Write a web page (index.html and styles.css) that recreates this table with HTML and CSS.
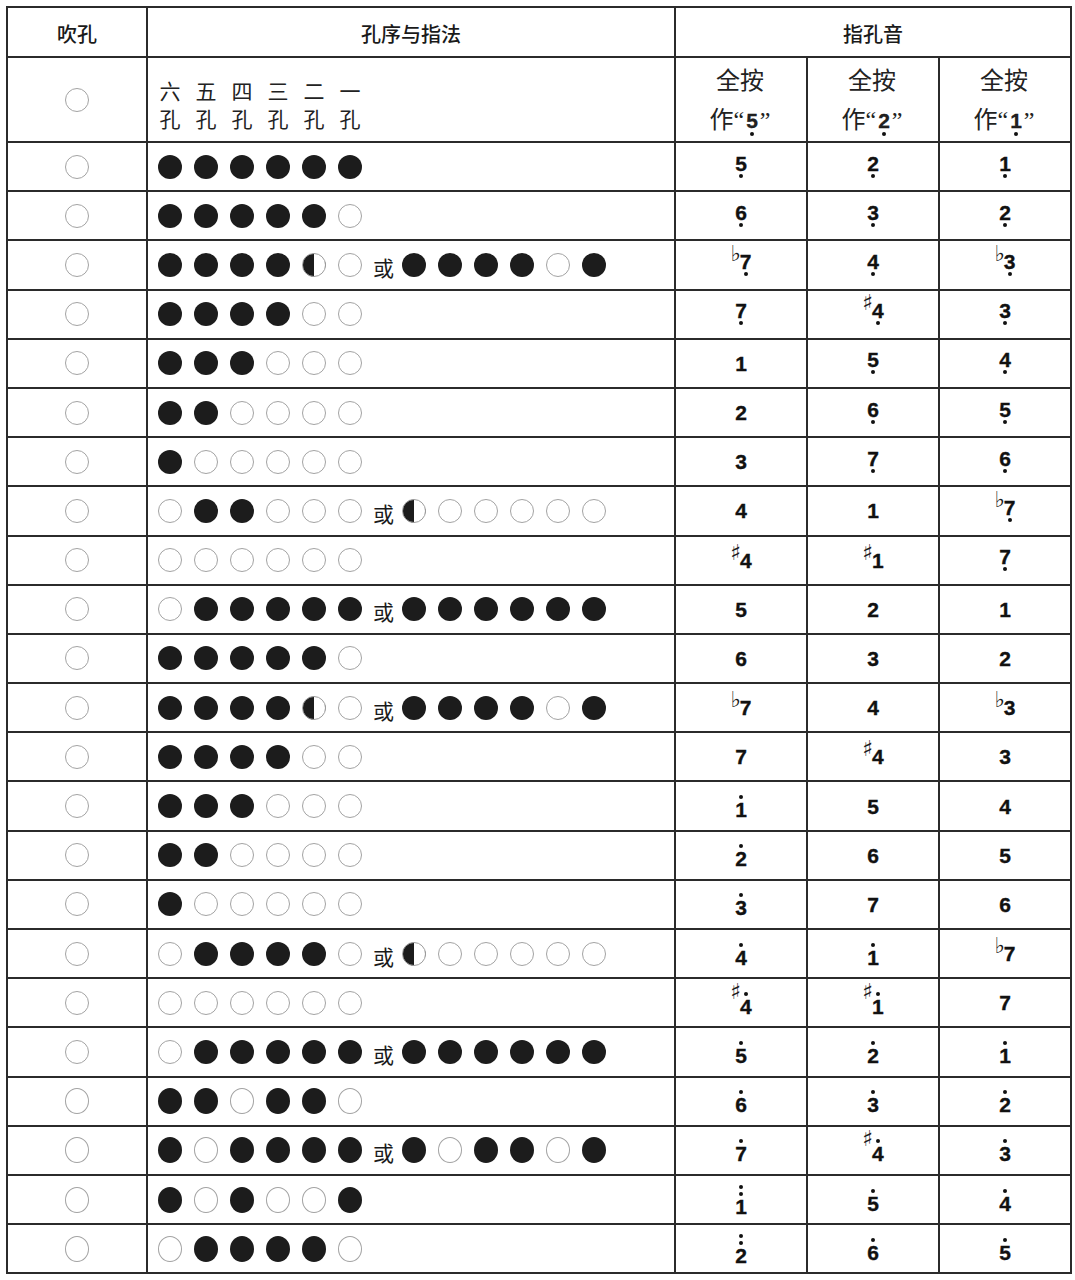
FILE: index.html
```html
<!DOCTYPE html>
<html lang="zh-CN">
<head>
<meta charset="utf-8">
<title>六孔箫指法表</title>
<link rel="stylesheet" href="styles.css">
</head>
<body>
<div class="page">
<table class="chart">
  <colgroup>
    <col class="c-blow"><col class="c-fing"><col class="c-note"><col class="c-note"><col class="c-note">
  </colgroup>
  <thead>
    <tr class="h1">
      <th>吹孔</th>
      <th>孔序与指法</th>
      <th colspan="3">指孔音</th>
    </tr>
    <tr class="h2">
      <td><div class="blow"><i class="o"></i></div></td>
      <td>
        <div class="holes">
          <span>六<br>孔</span><span>五<br>孔</span><span>四<br>孔</span><span>三<br>孔</span><span>二<br>孔</span><span>一<br>孔</span>
        </div>
      </td>
      <td><div class="key">全按<br>作<span class="q">“</span><span class="kd">5</span><span class="q">”</span></div></td>
      <td><div class="key">全按<br>作<span class="q">“</span><span class="kd">2</span><span class="q">”</span></div></td>
      <td><div class="key">全按<br>作<span class="q">“</span><span class="kd">1</span><span class="q">”</span></div></td>
    </tr>
  </thead>
  <tbody>
    <!-- 1 -->
    <tr>
      <td><div class="blow"><i class="o"></i></div></td>
      <td><div class="fing"><i class="f"></i><i class="f"></i><i class="f"></i><i class="f"></i><i class="f"></i><i class="f"></i></div></td>
      <td><div class="n"><b class="lo">5</b></div></td>
      <td><div class="n"><b class="lo">2</b></div></td>
      <td><div class="n"><b class="lo">1</b></div></td>
    </tr>
    <!-- 2 -->
    <tr>
      <td><div class="blow"><i class="o"></i></div></td>
      <td><div class="fing"><i class="f"></i><i class="f"></i><i class="f"></i><i class="f"></i><i class="f"></i><i class="o"></i></div></td>
      <td><div class="n"><b class="lo">6</b></div></td>
      <td><div class="n"><b class="lo">3</b></div></td>
      <td><div class="n"><b class="lo">2</b></div></td>
    </tr>
    <!-- 3 -->
    <tr>
      <td><div class="blow"><i class="o"></i></div></td>
      <td><div class="fing"><i class="f"></i><i class="f"></i><i class="f"></i><i class="f"></i><i class="h"></i><i class="o"></i><span class="or">或</span><i class="f"></i><i class="f"></i><i class="f"></i><i class="f"></i><i class="o"></i><i class="f"></i></div></td>
      <td><div class="n"><span class="acc">♭</span><b class="lo">7</b></div></td>
      <td><div class="n"><b class="lo">4</b></div></td>
      <td><div class="n"><span class="acc">♭</span><b class="lo">3</b></div></td>
    </tr>
    <!-- 4 -->
    <tr>
      <td><div class="blow"><i class="o"></i></div></td>
      <td><div class="fing"><i class="f"></i><i class="f"></i><i class="f"></i><i class="f"></i><i class="o"></i><i class="o"></i></div></td>
      <td><div class="n"><b class="lo">7</b></div></td>
      <td><div class="n"><span class="acc">♯</span><b class="lo">4</b></div></td>
      <td><div class="n"><b class="lo">3</b></div></td>
    </tr>
    <!-- 5 -->
    <tr>
      <td><div class="blow"><i class="o"></i></div></td>
      <td><div class="fing"><i class="f"></i><i class="f"></i><i class="f"></i><i class="o"></i><i class="o"></i><i class="o"></i></div></td>
      <td><div class="n"><b>1</b></div></td>
      <td><div class="n"><b class="lo">5</b></div></td>
      <td><div class="n"><b class="lo">4</b></div></td>
    </tr>
    <!-- 6 -->
    <tr>
      <td><div class="blow"><i class="o"></i></div></td>
      <td><div class="fing"><i class="f"></i><i class="f"></i><i class="o"></i><i class="o"></i><i class="o"></i><i class="o"></i></div></td>
      <td><div class="n"><b>2</b></div></td>
      <td><div class="n"><b class="lo">6</b></div></td>
      <td><div class="n"><b class="lo">5</b></div></td>
    </tr>
    <!-- 7 -->
    <tr>
      <td><div class="blow"><i class="o"></i></div></td>
      <td><div class="fing"><i class="f"></i><i class="o"></i><i class="o"></i><i class="o"></i><i class="o"></i><i class="o"></i></div></td>
      <td><div class="n"><b>3</b></div></td>
      <td><div class="n"><b class="lo">7</b></div></td>
      <td><div class="n"><b class="lo">6</b></div></td>
    </tr>
    <!-- 8 -->
    <tr>
      <td><div class="blow"><i class="o"></i></div></td>
      <td><div class="fing"><i class="o"></i><i class="f"></i><i class="f"></i><i class="o"></i><i class="o"></i><i class="o"></i><span class="or">或</span><i class="h"></i><i class="o"></i><i class="o"></i><i class="o"></i><i class="o"></i><i class="o"></i></div></td>
      <td><div class="n"><b>4</b></div></td>
      <td><div class="n"><b>1</b></div></td>
      <td><div class="n"><span class="acc">♭</span><b class="lo">7</b></div></td>
    </tr>
    <!-- 9 -->
    <tr>
      <td><div class="blow"><i class="o"></i></div></td>
      <td><div class="fing"><i class="o"></i><i class="o"></i><i class="o"></i><i class="o"></i><i class="o"></i><i class="o"></i></div></td>
      <td><div class="n"><span class="acc">♯</span><b>4</b></div></td>
      <td><div class="n"><span class="acc">♯</span><b>1</b></div></td>
      <td><div class="n"><b class="lo">7</b></div></td>
    </tr>
    <!-- 10 -->
    <tr>
      <td><div class="blow"><i class="o"></i></div></td>
      <td><div class="fing"><i class="o"></i><i class="f"></i><i class="f"></i><i class="f"></i><i class="f"></i><i class="f"></i><span class="or">或</span><i class="f"></i><i class="f"></i><i class="f"></i><i class="f"></i><i class="f"></i><i class="f"></i></div></td>
      <td><div class="n"><b>5</b></div></td>
      <td><div class="n"><b>2</b></div></td>
      <td><div class="n"><b>1</b></div></td>
    </tr>
    <!-- 11 -->
    <tr>
      <td><div class="blow"><i class="o"></i></div></td>
      <td><div class="fing"><i class="f"></i><i class="f"></i><i class="f"></i><i class="f"></i><i class="f"></i><i class="o"></i></div></td>
      <td><div class="n"><b>6</b></div></td>
      <td><div class="n"><b>3</b></div></td>
      <td><div class="n"><b>2</b></div></td>
    </tr>
    <!-- 12 -->
    <tr>
      <td><div class="blow"><i class="o"></i></div></td>
      <td><div class="fing"><i class="f"></i><i class="f"></i><i class="f"></i><i class="f"></i><i class="h"></i><i class="o"></i><span class="or">或</span><i class="f"></i><i class="f"></i><i class="f"></i><i class="f"></i><i class="o"></i><i class="f"></i></div></td>
      <td><div class="n"><span class="acc">♭</span><b>7</b></div></td>
      <td><div class="n"><b>4</b></div></td>
      <td><div class="n"><span class="acc">♭</span><b>3</b></div></td>
    </tr>
    <!-- 13 -->
    <tr>
      <td><div class="blow"><i class="o"></i></div></td>
      <td><div class="fing"><i class="f"></i><i class="f"></i><i class="f"></i><i class="f"></i><i class="o"></i><i class="o"></i></div></td>
      <td><div class="n"><b>7</b></div></td>
      <td><div class="n"><span class="acc">♯</span><b>4</b></div></td>
      <td><div class="n"><b>3</b></div></td>
    </tr>
    <!-- 14 -->
    <tr>
      <td><div class="blow"><i class="o"></i></div></td>
      <td><div class="fing"><i class="f"></i><i class="f"></i><i class="f"></i><i class="o"></i><i class="o"></i><i class="o"></i></div></td>
      <td><div class="n"><b class="hi">1</b></div></td>
      <td><div class="n"><b>5</b></div></td>
      <td><div class="n"><b>4</b></div></td>
    </tr>
    <!-- 15 -->
    <tr>
      <td><div class="blow"><i class="o"></i></div></td>
      <td><div class="fing"><i class="f"></i><i class="f"></i><i class="o"></i><i class="o"></i><i class="o"></i><i class="o"></i></div></td>
      <td><div class="n"><b class="hi">2</b></div></td>
      <td><div class="n"><b>6</b></div></td>
      <td><div class="n"><b>5</b></div></td>
    </tr>
    <!-- 16 -->
    <tr>
      <td><div class="blow"><i class="o"></i></div></td>
      <td><div class="fing"><i class="f"></i><i class="o"></i><i class="o"></i><i class="o"></i><i class="o"></i><i class="o"></i></div></td>
      <td><div class="n"><b class="hi">3</b></div></td>
      <td><div class="n"><b>7</b></div></td>
      <td><div class="n"><b>6</b></div></td>
    </tr>
    <!-- 17 -->
    <tr>
      <td><div class="blow"><i class="o"></i></div></td>
      <td><div class="fing"><i class="o"></i><i class="f"></i><i class="f"></i><i class="f"></i><i class="f"></i><i class="o"></i><span class="or">或</span><i class="h"></i><i class="o"></i><i class="o"></i><i class="o"></i><i class="o"></i><i class="o"></i></div></td>
      <td><div class="n"><b class="hi">4</b></div></td>
      <td><div class="n"><b class="hi">1</b></div></td>
      <td><div class="n"><span class="acc">♭</span><b>7</b></div></td>
    </tr>
    <!-- 18 -->
    <tr>
      <td><div class="blow"><i class="o"></i></div></td>
      <td><div class="fing"><i class="o"></i><i class="o"></i><i class="o"></i><i class="o"></i><i class="o"></i><i class="o"></i></div></td>
      <td><div class="n"><span class="acc">♯</span><b class="hi">4</b></div></td>
      <td><div class="n"><span class="acc">♯</span><b class="hi">1</b></div></td>
      <td><div class="n"><b>7</b></div></td>
    </tr>
    <!-- 19 -->
    <tr>
      <td><div class="blow"><i class="o"></i></div></td>
      <td><div class="fing"><i class="o"></i><i class="f"></i><i class="f"></i><i class="f"></i><i class="f"></i><i class="f"></i><span class="or">或</span><i class="f"></i><i class="f"></i><i class="f"></i><i class="f"></i><i class="f"></i><i class="f"></i></div></td>
      <td><div class="n"><b class="hi">5</b></div></td>
      <td><div class="n"><b class="hi">2</b></div></td>
      <td><div class="n"><b class="hi">1</b></div></td>
    </tr>
    <!-- 20 -->
    <tr class="tall">
      <td><div class="blow"><i class="o"></i></div></td>
      <td><div class="fing"><i class="f"></i><i class="f"></i><i class="o"></i><i class="f"></i><i class="f"></i><i class="o"></i></div></td>
      <td><div class="n"><b class="hi">6</b></div></td>
      <td><div class="n"><b class="hi">3</b></div></td>
      <td><div class="n"><b class="hi">2</b></div></td>
    </tr>
    <!-- 21 -->
    <tr class="tall">
      <td><div class="blow"><i class="o"></i></div></td>
      <td><div class="fing"><i class="f"></i><i class="o"></i><i class="f"></i><i class="f"></i><i class="f"></i><i class="f"></i><span class="or">或</span><i class="f"></i><i class="o"></i><i class="f"></i><i class="f"></i><i class="o"></i><i class="f"></i></div></td>
      <td><div class="n"><b class="hi">7</b></div></td>
      <td><div class="n"><span class="acc">♯</span><b class="hi">4</b></div></td>
      <td><div class="n"><b class="hi">3</b></div></td>
    </tr>
    <!-- 22 -->
    <tr class="tall">
      <td><div class="blow"><i class="o"></i></div></td>
      <td><div class="fing"><i class="f"></i><i class="o"></i><i class="f"></i><i class="o"></i><i class="o"></i><i class="f"></i></div></td>
      <td><div class="n"><b class="hi2">1</b></div></td>
      <td><div class="n"><b class="hi">5</b></div></td>
      <td><div class="n"><b class="hi">4</b></div></td>
    </tr>
    <!-- 23 -->
    <tr class="tall">
      <td><div class="blow"><i class="o"></i></div></td>
      <td><div class="fing"><i class="o"></i><i class="f"></i><i class="f"></i><i class="f"></i><i class="f"></i><i class="o"></i></div></td>
      <td><div class="n"><b class="hi2">2</b></div></td>
      <td><div class="n"><b class="hi">6</b></div></td>
      <td><div class="n"><b class="hi">5</b></div></td>
    </tr>
  </tbody>
</table>
</div>
</body>
</html>
```
FILE: styles.css
```css
html, body {
  margin: 0;
  padding: 0;
  background: #fff;
}

.page {
  padding: 6px 0 0 6px;
}

.chart {
  width: 1064px;
  border-collapse: collapse;
  table-layout: fixed;
  color: #111;
  font-family: "Noto Sans CJK SC", "Noto Sans", sans-serif;
}

.c-blow { width: 140px; }
.c-fing { width: 528px; }
.c-note { width: 132px; }

.chart th,
.chart td {
  border: 2px solid #2b2b2b;
  padding: 0;
  vertical-align: middle;
}

.chart tr.h1 { height: 50px; }
.chart tr.h2 { height: 85px; }
.chart tbody tr { height: 49.2px; }

.chart th {
  font-size: 20px;
  font-weight: 500;
  text-align: center;
  color: #1a1a1a;
  line-height: 1;
  padding-top: 3px;
}

/* blow hole */
.blow {
  display: flex;
  justify-content: center;
  align-items: center;
}

/* circles */
.blow i,
.fing i {
  display: block;
  width: 24px;
  height: 24px;
  border-radius: 50%;
  box-sizing: border-box;
  flex: none;
}

.tall .blow i,
.tall .fing i {
  height: 26px;
}

i.f {
  background: #1c1c1c;
}

i.o {
  background: #fff;
  border: 1.7px solid #a3a3a3;
}

i.h {
  border: 1.7px solid #9c9c9c;
  background: linear-gradient(to right, #1c1c1c 50%, #fff 50%);
}

/* fingering row */
.fing {
  display: flex;
  align-items: center;
  gap: 12px;
  padding-left: 10px;
}

.or {
  font-size: 21px;
  line-height: 24px;
  color: #1a1a1a;
  margin: 4px -4px 0 -1px;
}

/* hole labels */
.holes {
  display: flex;
  gap: 12px;
  padding-left: 10px;
  padding-top: 8px;
}

.holes span {
  width: 24px;
  text-align: center;
  font-size: 21px;
  line-height: 28px;
  color: #222;
}

/* key headers */
.key {
  text-align: center;
  font-size: 24px;
  line-height: 39px;
  color: #222;
  padding-right: 2px;
}

.q {
  font-family: "Liberation Serif", serif;
  font-size: 24px;
}

.kd {
  display: inline-block;
  font-family: "Liberation Sans", Arial, sans-serif;
  font-weight: 700;
  font-size: 21px;
  line-height: 1;
  position: relative;
  margin: 0 2px;
  -webkit-text-stroke: 0.3px #111;
}

.kd::after {
  content: "";
  position: absolute;
  left: 50%;
  bottom: -5px;
  width: 4px;
  height: 4px;
  margin-left: -2px;
  border-radius: 50%;
  background: #111;
}

/* notes */
.n {
  display: flex;
  justify-content: center;
  align-items: flex-start;
}

.n b {
  display: block;
  position: relative;
  font-family: "Liberation Sans", Arial, sans-serif;
  font-weight: 700;
  font-size: 21px;
  line-height: 15px;
  color: #111;
  -webkit-text-stroke: 0.35px #111;
}

.n b.lo { padding-bottom: 7px; }
.n b.hi { padding-top: 7px; }
.n b.hi2 { padding-top: 14px; }

.n b.lo::after,
.n b.hi::before,
.n b.hi2::before {
  content: "";
  position: absolute;
  left: 50%;
  width: 4px;
  height: 4px;
  margin-left: -2px;
  border-radius: 50%;
  background: #111;
}

.n b.lo::after { bottom: 0; }
.n b.hi::before { top: 0; }
.n b.hi2::before {
  top: 0;
  box-shadow: 0 7px 0 #111;
}

.acc {
  font-family: "DejaVu Sans", sans-serif;
  font-size: 22px;
  line-height: 18px;
  margin-top: -9px;
  margin-right: -1px;
  color: #1a1a1a;
}
```
